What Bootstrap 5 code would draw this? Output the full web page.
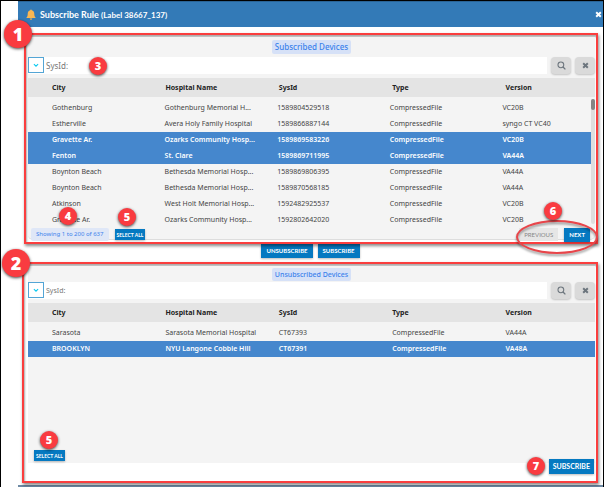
<!DOCTYPE html>
<html lang="en">
<head>
<meta charset="utf-8">
<meta name="viewport" content="width=device-width, initial-scale=1">
<title>Subscribe Rule</title>
<link href="https://cdn.jsdelivr.net/npm/bootstrap@5.3.0/dist/css/bootstrap.min.css" rel="stylesheet">
<style>
body{font-family:"Noto Sans","Open Sans",sans-serif;font-size:7px;line-height:16px;color:#444;background:#fff}
.frame{min-height:100vh;border:1px solid #000;padding-left:17px}
.dialog{border-bottom:2px solid #6f8ba5}
.titlebar{background:#337ab7;height:26px;padding:0 0 0 8px;color:#fff;border-top:1px solid #2a6496}
.titlebar h1{font-family:Lato,sans-serif;font-size:9px;line-height:24px;font-weight:700}
.titlebar h1 small{font-size:8px;font-weight:700}
.titlebar svg{width:10px;height:11px}
.close-x{width:8px;height:20px}
.close-x svg{width:7px;height:7px}
.zone{border:2px solid #fa3e3e;box-shadow:1px 2px 3px #0007,inset 1px 2px 2px #0005}
.zone-top{margin:6px 5px 0 6px;padding:2px 1px 0 2px;height:211px}
.zone-bottom{margin:4px 5px 2px 4px;padding:2px 1px 0 4px}
.inner{background:#f4f4f4}
.caption-row{height:20px}
.pill{background:#d6e1f7;color:#3b82ec;border-radius:2px}
.caption-row .pill{font-size:8px;line-height:14px;padding:0 3px;font-weight:500}
.zone-bottom .caption-row{height:16px}
.zone-bottom .caption-row .pill{font-size:7px;line-height:13px}
.search{height:17px}
.search .field{background:#fff}
.toggle{width:16px;height:16px;border:1px solid #53a5d5;background:#fff}
.toggle svg{width:6px;height:6px}
.query{font-size:8px;line-height:14px;color:#777;outline:0;background:transparent;padding:0 0 0 2px}
.zone-bottom .query{font-size:7px}
.query::placeholder{color:#777;opacity:1}
.tool{width:20px;height:17px;background:#dadada;box-shadow:0 1px 2px #0003}
.tool svg{width:9px;height:9px}
.tool:last-child svg{width:7px;height:7px}
.grid-table{display:block;margin-top:4px}
.grid-table thead,.grid-table tbody{display:block}
.grid-table tr{display:table;table-layout:fixed;width:100%}
.grid-table th{height:19px;background:#e4e4e4;color:#222;font-weight:700;padding:0 4px 0 24px}
.grid-table td{height:16px;line-height:16px;padding:0 0 0 24px;white-space:nowrap}
.grid-table tbody{padding-top:3px}
.zone-top tbody{padding-right:4px}
.chosen{background:#4587cd;color:#fff;font-weight:600}
.body-wrap{position:relative}
.track{position:absolute;right:0;top:21px;width:4px;height:125px;background:#dedede;border-radius:2px}
.thumb{width:4px;height:11px;background:#858585;border-radius:2px}
.foot{height:12px;padding:0 5px 0 3px;background:#f4f4f4;border-bottom:1px solid #ddd;border-radius:0 0 5px 5px}
.foot .pill{font-size:6px;line-height:13px;padding:0 5px;height:13px;background:#dfe7f7}
.foot-group{gap:6px}
.act{background:#0579c1;color:#fff;box-shadow:0 1px 2px #0004;font-size:7px;line-height:15px;height:15px;padding:0 4px;font-family:Lato,sans-serif;font-weight:700;white-space:nowrap}
.act-s{font-size:5px;height:11px;line-height:10px;padding:0 2px}
.foot .act-s{margin-top:1px}
.act-m{font-size:6px;height:14px;line-height:14px;padding:0 5px}
.act:disabled{background:#e6e6e6;color:#888;opacity:1;box-shadow:none;font-weight:400;height:13px;line-height:13px}
.middle{height:14px;gap:5px}
.blank{min-height:106px;padding:0 0 2px 6px}
.lower-foot{height:18px;padding-right:1px}
.lower-foot .act{margin-top:-4px}
.callout{position:absolute;z-index:3;width:18px;height:18px;border-radius:50%;background:#f93b40;color:#fff;font:800 11px/18px "Open Sans",sans-serif;text-align:center;box-shadow:0 1px 3px #000b}
.callout-lg{width:28px;height:28px;font-size:18px;line-height:28px;left:-22px;top:-15px}
.c3{left:63px;top:22px}.c4{left:33px;top:172px}.c5{left:92px;top:173px}.c6{right:34px;top:167px}
.c5b{left:16px;bottom:32px}.c7{right:51px;bottom:6px}
.ring{position:absolute;z-index:2;right:-2px;top:185px;width:82px;height:34px;border:2px solid #e8454a;border-radius:50%;filter:drop-shadow(0 2px 1px #0006);pointer-events:none}
</style>
<script src="https://cdn.jsdelivr.net/npm/bootstrap@5.3.0/dist/js/bootstrap.bundle.min.js"></script>
</head>
<body>
<svg class="d-none">
<symbol id="cross" viewBox="0 0 10 10"><path d="M1.7 1.7l6.6 6.6M8.3 1.7L1.7 8.3" stroke="currentColor" stroke-width="2.8"/></symbol>
<symbol id="lens" viewBox="0 0 10 10"><circle cx="4.3" cy="4.3" r="3.2" fill="none" stroke="currentColor" stroke-width="1.2"/><path d="M6.7 6.7l2.6 2.6" stroke="currentColor" stroke-width="1.5"/></symbol>
<symbol id="down" viewBox="0 0 10 10"><path d="M1.5 3.5L5 7l3.500-3.500" fill="none" stroke="currentColor" stroke-width="1.800"/></symbol>
</svg>
<div class="frame">
<main class="dialog">
<header class="titlebar d-flex align-items-center justify-content-between">
<div class="d-flex align-items-center gap-1">
<svg viewBox="0 0 20 22" aria-hidden="true"><path d="M10 1c1 0 1.500.7 1.500 1.600C15 3.500 16.500 6 16.500 9c0 5 1 6.500 3 9H.5c2-2.500 3-4 3-9 0-3 1.500-5.500 5-6.400C8.500 1.700 9 1 10 1zM7.500 19h5a2.500 2.500 0 0 1-5 0z" fill="#fbb752"/></svg>
<h1 class="m-0">Subscribe Rule <small>(Label 38667_137)</small></h1>
</div>
<button class="close-x btn border-0 p-0 text-white d-flex align-items-center" aria-label="Close"><svg><use href="#cross"/></svg></button>
</header>

<section class="zone zone-top position-relative">
<span class="callout callout-lg">1</span><span class="callout c3">3</span><span class="callout c4">4</span><span class="callout c5">5</span><span class="callout c6">6</span><span class="ring"></span>
<div class="inner">
<div class="caption-row d-flex justify-content-center align-items-center"><h2 class="pill m-0">Subscribed Devices</h2></div>
<div class="search d-flex">
<div class="field d-flex flex-grow-1 me-1">
<button class="toggle btn rounded-0 p-0 d-flex align-items-center justify-content-center text-info" aria-label="Choose field"><svg><use href="#down"/></svg></button>
<input class="query border-0 flex-grow-1" placeholder="SysId:" aria-label="SysId">
</div>
<button class="tool btn border-0 rounded-1 p-0 text-secondary d-flex align-items-center justify-content-center me-1" aria-label="Search"><svg><use href="#lens"/></svg></button>
<button class="tool btn border-0 rounded-1 p-0 text-secondary d-flex align-items-center justify-content-center" aria-label="Clear"><svg><use href="#cross"/></svg></button>
</div>
<div class="body-wrap">
<table class="grid-table">
<thead><tr><th>City</th><th>Hospital Name</th><th>SysId</th><th>Type</th><th>Version</th></tr></thead>
<tbody>
<tr><td>Gothenburg</td><td>Gothenburg Memorial H...</td><td>1589804529518</td><td>CompressedFile</td><td>VC20B</td></tr>
<tr><td>Estherville</td><td>Avera Holy Family Hospital</td><td>1589866887144</td><td>CompressedFile</td><td>syngo CT VC40</td></tr>
<tr class="chosen"><td>Gravette Ar.</td><td>Ozarks Community Hosp...</td><td>1589869583226</td><td>CompressedFile</td><td>VC20B</td></tr>
<tr class="chosen"><td>Fenton</td><td>St. Clare</td><td>1589869711995</td><td>CompressedFile</td><td>VA44A</td></tr>
<tr><td>Boynton Beach</td><td>Bethesda Memorial Hosp...</td><td>1589869806395</td><td>CompressedFile</td><td>VA44A</td></tr>
<tr><td>Boynton Beach</td><td>Bethesda Memorial Hosp...</td><td>1589870568185</td><td>CompressedFile</td><td>VA44A</td></tr>
<tr><td>Atkinson</td><td>West Holt Memorial Hosp...</td><td>1592482925537</td><td>CompressedFile</td><td>VC20B</td></tr>
<tr><td>Gravette Ar.</td><td>Ozarks Community Hosp...</td><td>1592802642020</td><td>CompressedFile</td><td>VC20B</td></tr>
</tbody>
</table>
<div class="track"><div class="thumb"></div></div>
</div>
</div>
<div class="foot d-flex justify-content-between">
<div class="foot-group d-flex"><span class="pill">Showing 1 to 200 of 637</span><button class="act act-s btn border-0 rounded-0">SELECT ALL</button></div>
<div class="foot-group d-flex"><button class="act act-m btn border-0 rounded-0" disabled>PREVIOUS</button><button class="act act-m btn border-0 rounded-0">NEXT</button></div>
</div>
</section>

<div class="middle d-flex justify-content-center"><button class="act act-m btn border-0 rounded-0">UNSUBSCRIBE</button><button class="act act-m btn border-0 rounded-0">SUBSCRIBE</button></div>

<section class="zone zone-bottom position-relative">
<span class="callout callout-lg">2</span><span class="callout c5b">5</span><span class="callout c7">7</span>
<div class="inner">
<div class="caption-row d-flex justify-content-center align-items-center"><h2 class="pill m-0">Unsubscribed Devices</h2></div>
<div class="search d-flex">
<div class="field d-flex flex-grow-1 me-1">
<button class="toggle btn rounded-0 p-0 d-flex align-items-center justify-content-center text-info" aria-label="Choose field"><svg><use href="#down"/></svg></button>
<input class="query border-0 flex-grow-1" placeholder="SysId:" aria-label="SysId">
</div>
<button class="tool btn border-0 rounded-1 p-0 text-secondary d-flex align-items-center justify-content-center me-1" aria-label="Search"><svg><use href="#lens"/></svg></button>
<button class="tool btn border-0 rounded-1 p-0 text-secondary d-flex align-items-center justify-content-center" aria-label="Clear"><svg><use href="#cross"/></svg></button>
</div>
<table class="grid-table">
<thead><tr><th>City</th><th>Hospital Name</th><th>SysId</th><th>Type</th><th>Version</th></tr></thead>
<tbody>
<tr><td>Sarasota</td><td>Sarasota Memorial Hospital</td><td>CT67393</td><td>CompressedFile</td><td>VA44A</td></tr>
<tr class="chosen"><td>BROOKLYN</td><td>NYU Langone Cobble Hill</td><td>CT67391</td><td>CompressedFile</td><td>VA48A</td></tr>
</tbody>
</table>
<div class="blank d-flex align-items-end"><button class="act act-s btn border-0 rounded-0">SELECT ALL</button></div>
</div>
<div class="lower-foot d-flex justify-content-end"><button class="act btn border-0 rounded-0">SUBSCRIBE</button></div>
</section>
</main>
</div>
</body>
</html>
